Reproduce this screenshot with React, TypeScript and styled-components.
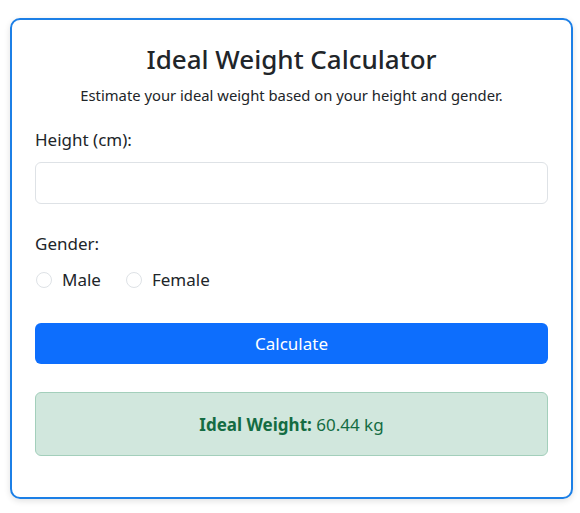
import React, { useState } from "react";
import styled, { createGlobalStyle } from "styled-components";

const GlobalStyle = createGlobalStyle`
  body {
    margin: 0;
    background: #fff;
    font-family: "Noto Sans", "Open Sans", sans-serif;
    color: #212529;
  }
`;

const Page = styled.div`
  padding: 18px 7px 14px 10px;
`;

const Card = styled.div`
  width: 563px;
  box-sizing: border-box;
  border: 2px solid #1c7fe6;
  border-radius: 10px;
  box-shadow: 0 2px 6px rgba(0, 0, 0, 0.12);
  padding: 24px 23px 41px;
  display: flex;
  flex-direction: column;
`;

const Title = styled.h2`
  margin: 0;
  text-align: center;
  font-size: 26px;
  font-weight: 500;
  line-height: 1.2;
`;

const Subtitle = styled.p`
  margin: 9px 0 0;
  text-align: center;
  font-size: 14.8px;
  line-height: 1.5;
`;

const Field = styled.div<{ $gap: number }>`
  margin-top: ${(p) => p.$gap}px;
  display: flex;
  flex-direction: column;
`;

const Label = styled.label`
  font-size: 17px;
  line-height: 1.5;
  margin-bottom: 9px;
`;

const Input = styled.input`
  height: 42px;
  box-sizing: border-box;
  border: 1px solid #dee2e6;
  border-radius: 6px;
  padding: 6px 12px;
  font: inherit;
`;

const RadioRow = styled.div`
  display: flex;
  gap: 24px;
  padding-top: 3px;
`;

const RadioOption = styled.label`
  display: flex;
  align-items: center;
  gap: 10px;
  font-size: 17px;
  padding-left: 1px;
`;

const RadioCircle = styled.span<{ $checked: boolean }>`
  width: 16px;
  height: 16px;
  box-sizing: border-box;
  border: ${(p) => (p.$checked ? "5px solid #0d6efd" : "1px solid #dee2e6")};
  border-radius: 50%;
`;

const Button = styled.button`
  margin-top: 32px;
  height: 41px;
  border: none;
  border-radius: 6px;
  background: #0d6efd;
  color: #fff;
  font-family: inherit;
  font-size: 17px;
`;

const Result = styled.div`
  margin-top: 28px;
  height: 64px;
  box-sizing: border-box;
  border: 1px solid #a3cfbb;
  border-radius: 6px;
  background: #d1e7dd;
  color: #146c43;
  display: flex;
  align-items: center;
  justify-content: center;
  font-size: 17px;
`;

const App: React.FC = () => {
  const [gender, setGender] = useState("");
  return (
    <Page>
      <GlobalStyle />
      <Card>
        <Title>Ideal Weight Calculator</Title>
        <Subtitle>Estimate your ideal weight based on your height and gender.</Subtitle>
        <Field $gap={21}>
          <Label>Height (cm):</Label>
          <Input type="text" />
        </Field>
        <Field $gap={27}>
          <Label>Gender:</Label>
          <RadioRow>
            <RadioOption onClick={() => setGender("male")}>
              <RadioCircle $checked={gender === "male"} />
              Male
            </RadioOption>
            <RadioOption onClick={() => setGender("female")}>
              <RadioCircle $checked={gender === "female"} />
              Female
            </RadioOption>
          </RadioRow>
        </Field>
        <Button>Calculate</Button>
        <Result>
          <span>
            <b>Ideal Weight:</b> 60.44 kg
          </span>
        </Result>
      </Card>
    </Page>
  );
};

export default App;
